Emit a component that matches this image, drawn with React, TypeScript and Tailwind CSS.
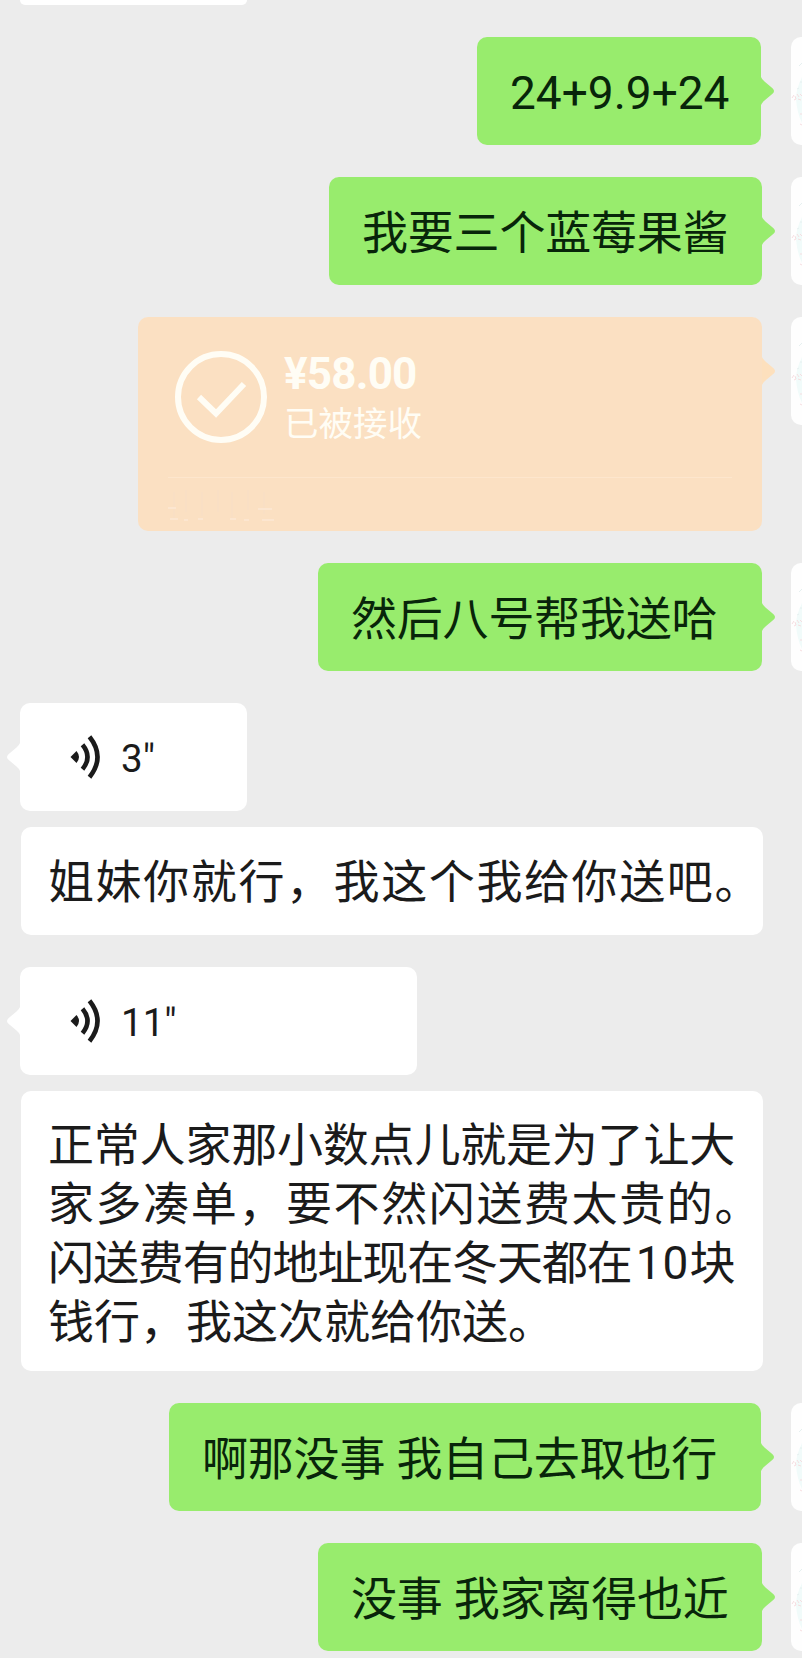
import React from 'react';
import clsx from 'clsx';

const cjkFont = "font-['Roboto','Noto_Sans_CJK_SC',sans-serif]";

interface Line {
  text: string;
  className: string;
  amount?: string;
  rest?: string;
}

function Avatar() {
  return (
    <div className="h-[108px] w-[11px] shrink-0 overflow-hidden rounded-l-[10px] bg-[#fefefe]">
      <svg width="11" height="108" viewBox="0 0 11 108" fill="none">
        <path d="M11 40 Q5 52 5 62 Q6 76 11 86 Z" fill="#f1fbfa" />
        <path d="M1 61 l2 -3 M4 59 l1 3 M6 57 l2 3 M9 57 l2 2 M3 63 l2 -1 M7 62 l3 1 M9 77 h2 M9 87 l2 1" stroke="#f6dde0" strokeWidth="1" />
        <path d="M8 29 l3 -3 M9 45 h2 M6 52 l2 -1" stroke="#e6f0f0" strokeWidth="1" />
      </svg>
    </div>
  );
}

function Tail({ className, flip }: { className: string; flip?: boolean }) {
  return (
    <svg
      className={clsx('absolute top-[40px]', flip ? 'right-full rotate-180' : 'left-full', className)}
      width="13"
      height="28"
      viewBox="0 0 13 28"
      fill="currentColor"
    >
      <path d="M0 0 Q1 2.5 3.5 4.5 L11.5 11.2 Q14.5 14 11.5 16.8 L3.5 23.5 Q1 25.5 0 28 Z" />
    </svg>
  );
}

function Sent({ line, width, right }: { line: Line; width: string; right?: string }) {
  return (
    <div className="flex justify-end">
      <div className={clsx('relative h-[108px] rounded-[10px] bg-[#98ec6d]', width, right ?? 'mr-[29px]')}>
        <Tail className="text-[#98ec6d]" />
        <p className={clsx('pt-[2px] pl-[33px] text-[46px] leading-[108px] whitespace-pre text-[#08250a]', line.className)}>
          {line.text}
        </p>
      </div>
      <Avatar />
    </div>
  );
}

function Transfer() {
  return (
    <div className="flex justify-end">
      <div className="relative mr-[29px] h-[214px] w-[624px] rounded-[10px] bg-[#fbe0c2]">
        <Tail className="text-[#fde0bd]" />
        <div className="flex h-[160px] pt-[33px] pl-[36px]">
          <svg width="94" height="94" viewBox="0 0 94 94" fill="none" stroke="#fffdf5">
            <circle cx="47" cy="47" r="43" strokeWidth="6" />
            <path d="M25 47 L42 63.5 L70 34" strokeWidth="6" />
          </svg>
          <div className="pl-[16px] text-[#fffdf5]">
            <p className="pt-px text-[44px] leading-[46px] font-bold tracking-[-0.8px]">¥58.00</p>
            <p className="text-[34.5px] leading-[54px]">已被接收</p>
          </div>
        </div>
        <div className="mx-[30px] h-px bg-[#fde6cd]" />
        {/* faded footer label */}
        <svg className="mt-[8px] ml-[26px]" width="118" height="40" viewBox="0 0 118 40" fill="none" strokeWidth="2">
          <path d="M10 6 V32 M22 4 V26 M38 6 V30 M54 4 V26 M68 6 V32 M84 4 V24 M100 6 V28" stroke="#f9dfc4" />
          <path d="M4 22 h8 M94 23 h14 M6 33 h8 M20 34 h4 M34 33 h5 M66 33 h6 M80 34 h5 M98 34 h12" stroke="#fce6d0" />
        </svg>
      </div>
      <Avatar />
    </div>
  );
}

function Voice({ seconds, width }: { seconds: string; width: string }) {
  return (
    <div className={clsx('relative ml-[20px] flex h-[108px] items-center rounded-[10px] bg-white text-[#1b1b1b]', width)}>
      <Tail className="text-white" flip />
      <svg className="ml-[50px]" width="32" height="44" viewBox="0 0 32 44" fill="none" stroke="currentColor" strokeWidth="4.6">
        <path d="M0.5 22 L6.5 16 Q11.5 22 6.5 28 Z" fill="currentColor" stroke="none" />
        <path d="M12.5 9.8 Q22.5 22 12.5 34.2" />
        <path d="M19.5 1.8 Q35.5 22 19.5 42.2" />
      </svg>
      <span className="ml-[19px] pt-[4px] text-[38.5px] leading-[104px]">{seconds}</span>
    </div>
  );
}

function Transcript({ lines, className }: { lines: Line[]; className: string }) {
  return (
    <div className={clsx('ml-[21px] w-[742px] rounded-[10px] bg-white pl-[27px] text-[46px] leading-[59px] whitespace-nowrap text-[#1b1b1b]', className)}>
      {lines.map((line) => (
        <p key={line.text} className={line.className}>
          {line.text}
          {line.amount && <span className="ml-[4px] tracking-[1px]">{line.amount}</span>}
          {line.rest}
        </p>
      ))}
    </div>
  );
}

const shortTranscript: Line[] = [{ text: '姐妹你就行，我这个我给你送吧。', className: 'tracking-[1.6px]' }];

const longTranscript: Line[] = [
  { text: '正常人家那小数点儿就是为了让大', className: 'tracking-[-0.2px]' },
  { text: '家多凑单，要不然闪送费太贵的。', className: 'tracking-[1.6px]' },
  { text: '闪送费有的地址现在冬天都在', amount: '10', rest: '块', className: 'tracking-[-1.1px]' },
  { text: '钱行，我这次就给你送。', className: 'tracking-[0px]' },
];

export default function App() {
  return (
    <div className={clsx('h-[1658px] w-[802px] overflow-hidden bg-[#ececec]', cjkFont)}>
      <div className="ml-[20px] h-[5px] w-[227px] rounded-b-[8px] bg-white" />
      <div className="mt-[32px] flex flex-col gap-[32px]">
        <Sent line={{ text: '24+9.9+24', className: '' }} width="w-[284px]" right="mr-[30px]" />
        <Sent line={{ text: '我要三个蓝莓果酱', className: 'tracking-[-0.2px]' }} width="w-[433px]" />
        <Transfer />
        <Sent line={{ text: '然后八号帮我送哈', className: 'tracking-[-0.2px]' }} width="w-[444px]" />
        <div className="flex flex-col gap-[16px]">
          <Voice seconds={'3"'} width="w-[227px]" />
          <Transcript lines={shortTranscript} className="h-[108px] pt-[26px]" />
        </div>
        <div className="flex flex-col gap-[16px]">
          <Voice seconds={'11"'} width="w-[397px]" />
          <Transcript lines={longTranscript} className="h-[280px] pt-[25px]" />
        </div>
        <Sent line={{ text: '啊那没事 我自己去取也行', className: 'tracking-[-0.2px]' }} width="w-[592px]" right="mr-[30px]" />
        <Sent line={{ text: '没事 我家离得也近', className: 'tracking-[-0.2px]' }} width="w-[444px]" />
      </div>
    </div>
  );
}
